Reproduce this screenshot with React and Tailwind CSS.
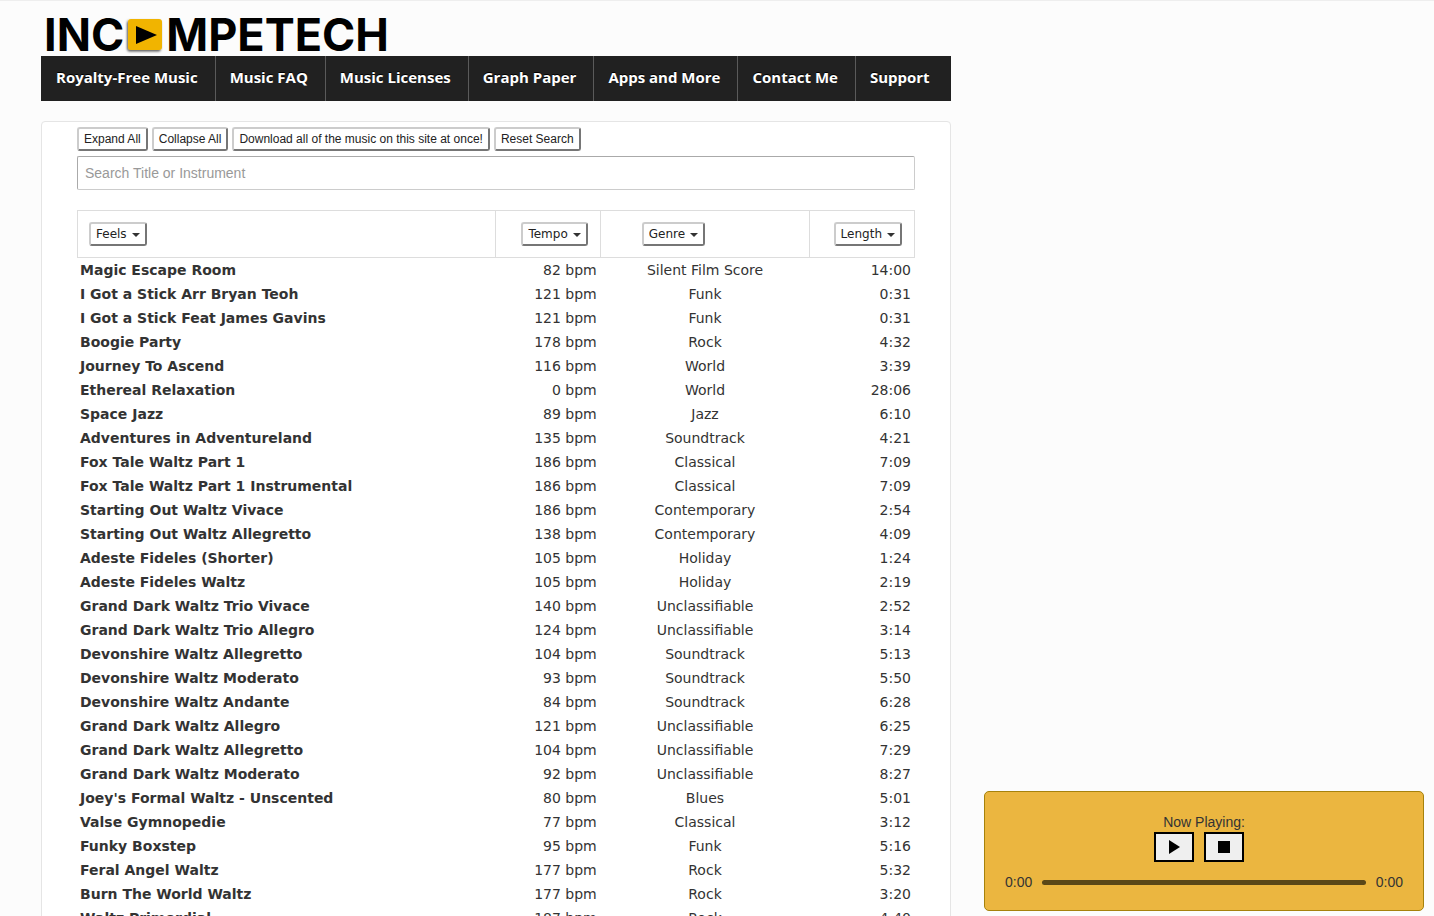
import React, { useState } from "react";

const NAV = [
  "Royalty-Free Music",
  "Music FAQ",
  "Music Licenses",
  "Graph Paper",
  "Apps and More",
  "Contact Me",
  "Support"
];

const PIECES = [
  ["Magic Escape Room", 82, "Silent Film Score", "14:00"],
  ["I Got a Stick Arr Bryan Teoh", 121, "Funk", "0:31"],
  ["I Got a Stick Feat James Gavins", 121, "Funk", "0:31"],
  ["Boogie Party", 178, "Rock", "4:32"],
  ["Journey To Ascend", 116, "World", "3:39"],
  ["Ethereal Relaxation", 0, "World", "28:06"],
  ["Space Jazz", 89, "Jazz", "6:10"],
  ["Adventures in Adventureland", 135, "Soundtrack", "4:21"],
  ["Fox Tale Waltz Part 1", 186, "Classical", "7:09"],
  ["Fox Tale Waltz Part 1 Instrumental", 186, "Classical", "7:09"],
  ["Starting Out Waltz Vivace", 186, "Contemporary", "2:54"],
  ["Starting Out Waltz Allegretto", 138, "Contemporary", "4:09"],
  ["Adeste Fideles (Shorter)", 105, "Holiday", "1:24"],
  ["Adeste Fideles Waltz", 105, "Holiday", "2:19"],
  ["Grand Dark Waltz Trio Vivace", 140, "Unclassifiable", "2:52"],
  ["Grand Dark Waltz Trio Allegro", 124, "Unclassifiable", "3:14"],
  ["Devonshire Waltz Allegretto", 104, "Soundtrack", "5:13"],
  ["Devonshire Waltz Moderato", 93, "Soundtrack", "5:50"],
  ["Devonshire Waltz Andante", 84, "Soundtrack", "6:28"],
  ["Grand Dark Waltz Allegro", 121, "Unclassifiable", "6:25"],
  ["Grand Dark Waltz Allegretto", 104, "Unclassifiable", "7:29"],
  ["Grand Dark Waltz Moderato", 92, "Unclassifiable", "8:27"],
  ["Joey's Formal Waltz - Unscented", 80, "Blues", "5:01"],
  ["Valse Gymnopedie", 77, "Classical", "3:12"],
  ["Funky Boxstep", 95, "Funk", "5:16"],
  ["Feral Angel Waltz", 177, "Rock", "5:32"],
  ["Burn The World Waltz", 177, "Rock", "3:20"],
  ["Waltz Primordial", 187, "Rock", "4:40"]
];

// raised border shared by the toolbar buttons and the column menus
const raised =
  "rounded-[3px] border-2 border-t-[#ccc] border-l-[#ccc] border-r-[#767676] border-b-[#767676] bg-white text-xs text-[#222]";

function ToolButton({ children, onClick }) {
  return (
    <button type="button" onClick={onClick} className={`${raised} h-6 px-[5px] whitespace-nowrap`}>
      {children}
    </button>
  );
}

function ColumnMenu({ label }) {
  return (
    <span className="relative inline-block align-middle">
      <select
        aria-label={label}
        className={`${raised} field-sizing-content h-6 appearance-none pr-[18px] pl-[5px] font-['DejaVu_Sans',sans-serif] font-normal`}
      >
        <option>{label}</option>
      </select>
      <svg viewBox="0 0 8 4" className="pointer-events-none absolute top-[11px] right-[7px] h-1 w-2">
        <path d="M0 0h8L4 4z" fill="#333" />
      </svg>
    </span>
  );
}

function Logo() {
  return (
    <a
      href="#"
      aria-label="Incompetech"
      className="flex h-[55px] items-center pt-3 pl-[3px] font-['Inter',sans-serif] text-[45px] leading-none font-bold text-black"
    >
      <span>INC</span>
      <svg viewBox="0 0 42 40" className="h-10 w-[42px]">
        <defs>
          <filter id="logo-shadow" x="-20%" y="-20%" width="150%" height="150%">
            <feDropShadow dx="-1" dy="1.5" stdDeviation="1.3" floodOpacity="0.65" />
          </filter>
        </defs>
        <rect x="4" y="4" width="34" height="31" rx="3" fill="#f1b400" filter="url(#logo-shadow)" />
        <path d="M12 11v18l21-9z" fill="#000" />
      </svg>
      <span>MPETECH</span>
    </a>
  );
}

function Player() {
  const [playing, setPlaying] = useState(false);
  const [position, setPosition] = useState(0);

  const stop = () => {
    setPlaying(false);
    setPosition(0);
  };

  return (
    <section
      aria-label="Player"
      className="fixed right-[10px] bottom-[5px] w-full max-w-[440px] rounded-[5px] border border-[#a6820c] bg-[#ebb640] px-5 pt-5 pb-[18px] text-sm"
    >
      <p className="text-center">Now Playing:</p>
      <div className="flex justify-center">
        <button
          type="button"
          aria-label="Play"
          aria-pressed={playing}
          onClick={() => setPlaying(!playing)}
          className="mr-[10px] flex h-[30px] w-10 items-center justify-center border-2 border-black bg-[#efefef]"
        >
          <svg viewBox="0 0 12 14" className="ml-[2px] h-[14px] w-3">
            <path d="M0 0v14l11-7z" />
          </svg>
        </button>
        <button
          type="button"
          aria-label="Stop"
          onClick={stop}
          className="mr-[10px] flex h-[30px] w-10 items-center justify-center border-2 border-black bg-[#efefef]"
        >
          <svg viewBox="0 0 12 12" className="h-3 w-3">
            <path d="M0 0h12v12H0z" />
          </svg>
        </button>
      </div>
      <div className="mt-[10px] flex items-center gap-[10px]">
        <span>0:00</span>
        <input
          type="range"
          aria-label="Seek"
          min={0}
          max={100}
          value={position}
          onChange={(e) => setPosition(Number(e.target.value))}
          className="h-[5px] min-w-0 flex-1 appearance-none rounded-full bg-[#5a4718] [&::-webkit-slider-thumb]:h-0 [&::-webkit-slider-thumb]:w-0 [&::-webkit-slider-thumb]:appearance-none"
        />
        <span>0:00</span>
      </div>
    </section>
  );
}

export default function App() {
  const [query, setQuery] = useState("");

  const rows = PIECES.filter((p) => p[0].toLowerCase().includes(query.toLowerCase()));

  return (
    <div className="min-h-screen border-t border-[#eee] bg-[#fcfcfc] font-['Liberation_Sans',Arial,sans-serif] text-[#333]">
      <div className="ml-[41px] max-w-[910px]">
        <Logo />

        <nav className="flex h-[45px] bg-[#212121] pl-px font-['Open_Sans',sans-serif] text-[15px] font-bold text-white [text-shadow:0_-1px_0_#000]">
          {NAV.map((item) => (
            <a
              key={item}
              href="#"
              className="flex items-center border-r border-[#5a5a5a] pr-[17px] pb-[2px] pl-[14px] whitespace-nowrap last:border-r-0"
            >
              {item}
            </a>
          ))}
        </nav>

        <main className="mt-5 rounded border border-[#e5e5e5] bg-white px-[35px] pt-[5px]">
          <div className="flex gap-1">
            <ToolButton>Expand All</ToolButton>
            <ToolButton>Collapse All</ToolButton>
            <ToolButton>Download all of the music on this site at once!</ToolButton>
            <ToolButton onClick={() => setQuery("")}>Reset Search</ToolButton>
          </div>

          <input
            type="text"
            aria-label="Search Title or Instrument"
            placeholder="Search Title or Instrument"
            value={query}
            onChange={(e) => setQuery(e.target.value)}
            className="mt-[5px] block h-[34px] w-full rounded-[2px] border border-[#ccc] border-t-[#aaa] border-l-[#aaa] px-[7px] text-sm placeholder:text-[#999]"
          />

          <table className="mt-5 w-full table-fixed border-separate border-spacing-0 font-['DejaVu_Sans',sans-serif] text-sm">
            <thead>
              <tr className="h-12 [&>th]:border-y [&>th]:border-r [&>th]:border-[#ddd]">
                <th className="w-1/2 border-l pl-[11px] text-left">
                  <ColumnMenu label="Feels" />
                </th>
                <th className="w-1/8 pr-3 text-right">
                  <ColumnMenu label="Tempo" />
                </th>
                <th className="w-1/4 pl-[41px] text-left">
                  <ColumnMenu label="Genre" />
                </th>
                <th className="w-1/8 pr-3 text-right">
                  <ColumnMenu label="Length" />
                </th>
              </tr>
            </thead>
            <tbody>
              {rows.map(([title, bpm, genre, length]) => (
                <tr key={title} className="h-6">
                  <td className="pr-1 pl-[3px] font-bold">{title}</td>
                  <td className="pr-1 pl-[3px] text-right">{bpm} bpm</td>
                  <td className="pr-1 pl-[3px] text-center">{genre}</td>
                  <td className="pr-1 pl-[3px] text-right">{length}</td>
                </tr>
              ))}
            </tbody>
          </table>
        </main>
      </div>

      <Player />
    </div>
  );
}
